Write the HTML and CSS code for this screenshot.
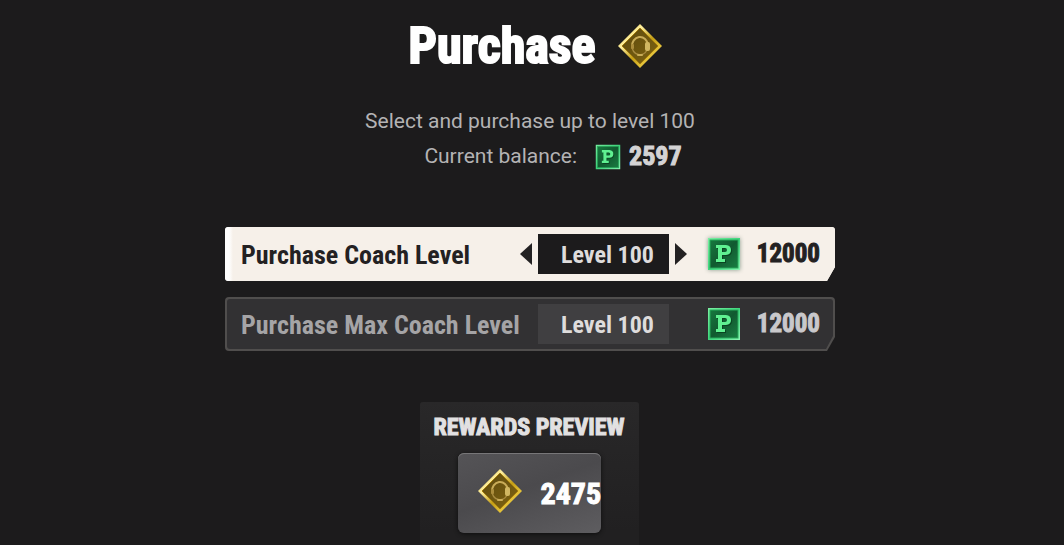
FILE: index.html
```
<!DOCTYPE html>
<html lang="en">
<head>
<meta charset="utf-8">
<title>Purchase</title>
<link rel="stylesheet" href="styles.css">
</head>
<body>
<svg class="defs" width="0" height="0" aria-hidden="true">
	<defs>
		<linearGradient id="goldEdge" x1="0" y1="0" x2="1" y2="1">
			<stop offset="0" stop-color="#d9b51c"/>
			<stop offset=".3" stop-color="#fff0a0"/>
			<stop offset=".55" stop-color="#c39d14"/>
			<stop offset=".8" stop-color="#f0cf45"/>
			<stop offset="1" stop-color="#9c7608"/>
		</linearGradient>
		<linearGradient id="goldFill" x1="0" y1="0" x2="1" y2="1">
			<stop offset="0" stop-color="#5c480d"/>
			<stop offset="1" stop-color="#806512"/>
		</linearGradient>
		<linearGradient id="greenEdge" x1="0" y1="0" x2="1" y2="1">
			<stop offset="0" stop-color="#7df0a4"/>
			<stop offset=".5" stop-color="#3fd67d"/>
			<stop offset="1" stop-color="#8df5b4"/>
		</linearGradient>
		<linearGradient id="greenFill" x1="0" y1="0" x2="1" y2="1">
			<stop offset="0" stop-color="#17793f"/>
			<stop offset=".5" stop-color="#115a30"/>
			<stop offset="1" stop-color="#1a7d43"/>
		</linearGradient>
		<symbol id="coach" viewBox="0 0 46 46">
			<path d="M23 1 45 23 23 45 1 23Z" fill="url(#goldEdge)"/>
			<path d="M23 5 41 23 23 41 5 23Z" fill="url(#goldFill)" stroke="#a47d0b"/>
			<path d="M15 24A8 9 0 0 1 31 22" fill="none" stroke="#c9ac58" stroke-width="2"/>
			<path d="M15 23A8 9 0 0 0 30 27" fill="none" stroke="#a88b40" stroke-width="1.500"/>
			<rect x="14" y="21" width="3" height="5" rx="1" fill="#ab8d3c"/>
			<rect x="28" y="19" width="5" height="9" rx="2" fill="#d1b762"/>
			<rect x="20" y="31" width="6" height="2" rx="1" fill="#c9ac58"/>
		</symbol>
		<symbol id="coin" viewBox="0 0 34 34">
			<rect x="1" y="1" width="32" height="32" fill="url(#greenEdge)"/>
			<rect x="3" y="3" width="28" height="28" fill="url(#greenFill)" stroke="#27a95a"/>
			<path d="M12 9H20Q25 9.500 25 14T20 19H16V23H19V26H10V23H12V12H10V9ZM16 12V16H19Q21 16 21 14T19 12Z" fill="#0a4522" fill-rule="evenodd"/>
			<path d="M11 8H19Q24 8.500 24 13T19 18H15V22H18V25H9V22H11V11H9V8ZM15 11V15H18Q20 15 20 13T18 11Z" fill="#5ff091" fill-rule="evenodd"/>
		</symbol>
	</defs>
</svg>

<main class="page">
	<h1 class="title">Purchase <svg class="coach" aria-hidden="true"><use href="#coach"/></svg></h1>

	<div class="info">
		<p>Select and purchase up to level 100</p>
		<p class="balance">Current balance: <svg class="coin small" aria-hidden="true"><use href="#coin"/></svg><strong>2597</strong></p>
	</div>

	<div class="rows">
		<div class="row active">
			<button class="name" type="button">Purchase Coach Level</button>
			<button class="arrow prev" type="button" aria-label="Previous level"></button>
			<span class="level">Level 100</span>
			<button class="arrow next" type="button" aria-label="Next level"></button>
			<svg class="coin" aria-hidden="true"><use href="#coin"/></svg>
			<span class="price">12000</span>
		</div>
		<div class="row">
			<button class="name wide" type="button">Purchase Max Coach Level</button>
			<span class="level">Level 100</span>
			<svg class="coin" aria-hidden="true"><use href="#coin"/></svg>
			<span class="price">12000</span>
		</div>
	</div>

	<section class="rewards">
		<h2>REWARDS PREVIEW</h2>
		<div class="card">
			<svg class="coach" aria-hidden="true"><use href="#coach"/></svg>
			<span>2475</span>
		</div>
	</section>
</main>
</body>
</html>
```
FILE: styles.css
```
body, h1, h2, p {margin:0; padding:0;}
* {box-sizing:border-box;}

body {background:#1c1b1c; color:#fff; font-family:"Roboto Condensed", "Liberation Sans Narrow", Roboto, sans-serif; font-weight:bold;}
button {border:0; padding:0; background:none; color:inherit; font:inherit; cursor:pointer;}
.defs {position:absolute;}

.page {min-height:100vh; padding:16px 4px 0 0; display:flex; flex-direction:column; align-items:center;}

.title {display:flex; align-items:center; gap:22px; padding-left:12px; font-size:50px; line-height:60px; -webkit-text-stroke:2px #fff;}
.coach {width:46px; height:46px; flex:none;}

.info {margin-top:28px; color:#b4b3b4; font-family:Roboto, "Liberation Sans", sans-serif; font-size:21px; font-weight:normal; line-height:35px; text-align:center;}
.balance {display:flex; align-items:center; justify-content:center; padding-left:46px;}
.balance strong {margin-left:8px; color:#d4d3d4; font-family:"Roboto Condensed", Roboto, sans-serif; font-size:26px; -webkit-text-stroke:1px #d4d3d4;}

.coin {width:34px; height:34px; flex:none;}
.coin.small {width:26px; height:26px; margin-left:18px;}

.rows {width:100%; max-width:610px; margin-top:53px; display:flex; flex-direction:column; gap:16px;}
.row {
	height:54px; padding:0 15px 0 16px; position:relative; z-index:0;
	display:grid; grid-template-columns:minmax(0, 1fr) 26px 131px 26px 34px 73px; column-gap:6px; align-items:center;
	background:#504e4d; border-radius:4px; color:#a5a4a6; font-size:26px; line-height:40px;
	clip-path:polygon(0 0, 100% 0, 100% calc(100% - 14px), calc(100% - 8px) 100%, 0 100%);
}
.row::before {
	content:""; position:absolute; inset:2px; z-index:-1; background:#323133; border-radius:3px;
	clip-path:polygon(0 0, 100% 0, 100% calc(100% - 13px), calc(100% - 7px) 100%, 0 100%);
}
.row.active {background:#f6f0e9; color:#232122;}
.row.active::before {background:linear-gradient(90deg, #fff 4px, #f6f0e9 8px); inset:0;}

.name {grid-column:1; padding-top:2px; text-align:left; white-space:nowrap;}
.name.wide {grid-column:1 / 3;}
.arrow {width:12px; height:22px; background:#232122;}
.prev {justify-self:end; clip-path:polygon(100% 0, 100% 100%, 0 50%);}
.next {clip-path:polygon(0 0, 100% 50%, 0 100%);}
.level {grid-column:3; padding:2px 0 0 8px; background:#403f41; color:#dedcdc; font-size:24px; line-height:38px; text-align:center;}
.active .level {background:#1c1b1c;}
.row .coin {grid-column:5;}
.active .coin {filter:drop-shadow(0 0 2px #8a9a8c);}
.price {grid-column:6; color:#c9c8cb; font-size:25px; text-align:right; -webkit-text-stroke:1px #c9c8cb;}
.active .price {color:#232122; -webkit-text-stroke-color:#232122;}

.rewards {flex:1; margin:51px 2px 0 0; padding:8px 14px 11px; background:linear-gradient(#292829, #212021 90%); border-radius:3px 3px 0 0;}
.rewards h2 {color:#e2e1e2; font-size:24px; line-height:34px; -webkit-text-stroke:1px #e2e1e2;}
.card {
	width:143px; height:80px; margin:9px auto 0; padding:0 0 4px 19px; display:flex; align-items:center; gap:18px;
	background:linear-gradient(160deg, #555457, #4b4a4d 45%, #5e5d60); border-radius:6px; box-shadow:0 1px 4px #0e0e0e, inset 0 1px 0 #777678;
	font-size:30px; -webkit-text-stroke:1px #fff;
}
.card span {padding-top:4px;}
```
